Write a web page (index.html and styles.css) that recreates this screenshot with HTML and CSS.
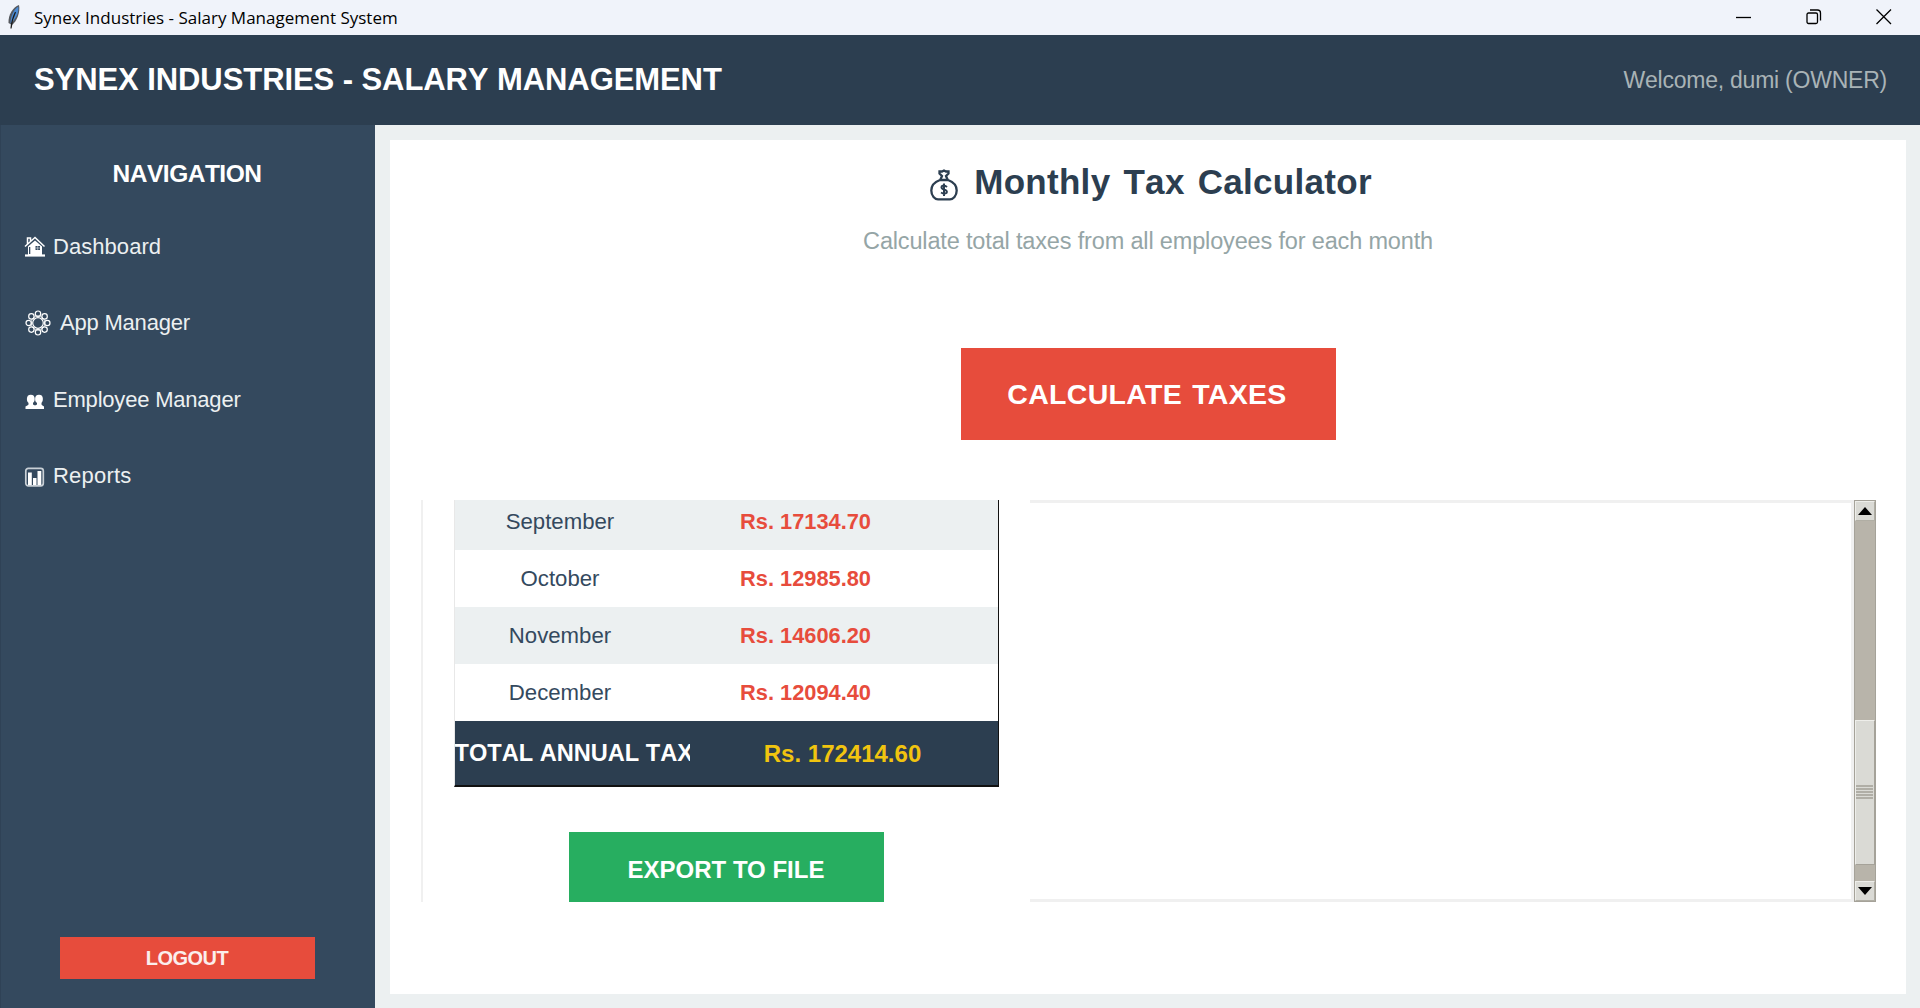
FILE: index.html
```html
<!DOCTYPE html>
<html lang="en">
<head>
<meta charset="utf-8">
<title>Synex Industries - Salary Management System</title>
<link rel="stylesheet" href="styles.css">
</head>
<body>
<div class="window">
  <div class="titlebar">
    <svg class="feather" width="16" height="26" viewBox="0 0 16 26">
      <path d="M13 1C7 3 2 11 2.500 19L6 21C11 17 14.500 8 13 1Z" fill="#55585e"/>
      <path d="M12.300 2.500C7 6 4.500 13 4.500 19.500C10 15 13 9 12.300 2.500Z" fill="#4a8ad4"/>
      <path d="M9.500 8C7 13 5.500 18 5 24.500" fill="none" stroke="#1c1c1c" stroke-width="1.200"/>
    </svg>
    <span class="window-title">Synex Industries - Salary Management System</span>
    <div class="window-controls">
      <svg width="16" height="16" viewBox="0 0 16 16"><path d="M0 8.500H15"/></svg>
      <svg width="16" height="16" viewBox="0 0 16 16"><rect x="1" y="4" width="10.500" height="10.500" rx="1.500"/><path d="M4 1H11.500Q14.500 1 14.500 4V11.500"/></svg>
      <svg width="16" height="16" viewBox="0 0 16 16"><path d="M.5 .5L15 15M15 .5L.5 15"/></svg>
    </div>
  </div>
  <header class="header">
    <h1 class="brand">SYNEX INDUSTRIES - SALARY MANAGEMENT</h1>
    <span class="welcome">Welcome, dumi (OWNER)</span>
  </header>
  <div class="body">
    <nav class="sidebar">
      <h2 class="nav-heading">NAVIGATION</h2>
      <a class="nav-item nav-item-home">
        <svg width="29" height="26" viewBox="0 0 29 26"><path d="M1 21.500H21" fill="none" stroke="#fff" stroke-width="2.200"/><path d="M1 12.500L11 3.500L20.500 12.500M3.500 10V4H6.500V7" fill="none" stroke="#fff" stroke-width="1.500"/><path d="M4 12.500L11 6.500L18 12.500V21H4Z" fill="#fff"/><path d="M11.500 12H16V16H11.500ZM5 13H6.300V20H5Z" fill="#34495e"/><path d="M13.700 12V16M11.500 14H16" stroke="#c8d0d6" stroke-width=".7"/></svg>
        <span>Dashboard</span>
      </a>
      <a class="nav-item">
        <svg width="36" height="26" viewBox="0 0 36 26"><g fill="none" stroke="#fff" stroke-width="1.200"><circle cx="14" cy="13" r="5.300"/><circle cx="14" cy="13" r="7" stroke-width=".7"/><circle cx="14" cy="3.700" r="2.700"/><circle cx="20.600" cy="6.400" r="2.700"/><circle cx="23.300" cy="13" r="2.700"/><circle cx="20.600" cy="19.600" r="2.700"/><circle cx="14" cy="22.300" r="2.700"/><circle cx="7.400" cy="19.600" r="2.700"/><circle cx="4.700" cy="13" r="2.700"/><circle cx="7.400" cy="6.400" r="2.700"/></g></svg>
        <span>App Manager</span>
      </a>
      <a class="nav-item nav-item-people">
        <svg width="29" height="26" viewBox="0 0 29 26"><g fill="#fff"><ellipse cx="6.800" cy="12" rx="3.900" ry="4.300"/><ellipse cx="15" cy="12" rx="3.900" ry="4.300"/><path d="M4.500 14H9V19H4.500ZM13 14H17.500V19H13Z"/><path d="M1.500 22V19.500L5 17.500H9L11 18.500L13 17.500H17L20 19.500V22Z"/></g></svg>
        <span>Employee Manager</span>
      </a>
      <a class="nav-item nav-item-reports">
        <svg width="29" height="26" viewBox="0 0 29 26"><rect x="1.800" y="4.300" width="17.500" height="17.500" rx="2.500" fill="none" stroke="#c9d0d6" stroke-width="1.700"/><path d="M4 8.500H7.800V21H4ZM9 14H12.500V21H9ZM13.500 7H17.300V21H13.500Z" fill="#fff"/></svg>
        <span>Reports</span>
      </a>
      <button class="logout">LOGOUT</button>
    </nav>
    <main class="main">
      <section class="card">
        <h2 class="page-title">
          <svg width="30" height="34" viewBox="0 0 30 34"><g fill="none" stroke="#2c3e50" stroke-width="2.300"><path d="M11 12C5.500 14 2.300 18 2.300 22.500C2.300 28 6 31.300 9 31.300H21C24 31.300 27.700 28 27.700 22.500C27.700 18 24.500 14 19 12Z"/><path d="M11.500 11.500L13 8L10.500 5.500V3.500H13L15 2.500L17 3.500H19.500V5.500L17 8L18.500 11.500"/></g><path d="M18 19Q15 16.500 12.700 18.300Q11.700 20.500 15 21.500Q18.700 22.500 17.700 24.700Q15.500 26.500 12 24.500M15 15.500V28" fill="none" stroke="#2c3e50" stroke-width="2"/></svg>
          <span>Monthly Tax Calculator</span>
        </h2>
        <p class="subtitle">Calculate total taxes from all employees for each month</p>
        <button class="calculate">CALCULATE TAXES</button>
        <div class="results">
          <div class="results-left">
            <div class="table">
              <div class="row shaded first"><span class="month">September</span><span class="amount">Rs. 17134.70</span></div>
              <div class="row"><span class="month">October</span><span class="amount">Rs. 12985.80</span></div>
              <div class="row shaded"><span class="month">November</span><span class="amount">Rs. 14606.20</span></div>
              <div class="row"><span class="month">December</span><span class="amount">Rs. 12094.40</span></div>
              <div class="row total"><span class="total-label">TOTAL ANNUAL TAX</span><span class="total-amount">Rs. 172414.60</span></div>
            </div>
            <button class="export">EXPORT TO FILE</button>
          </div>
          <div class="results-right"></div>
          <div class="scrollbar">
            <div class="arrow"><svg width="14" height="8" viewBox="0 0 14 8"><path d="M7 0L14 8H0Z"/></svg></div>
            <div class="trough"></div>
            <div class="thumb"><i></i><i></i><i></i><i></i><i></i></div>
            <div class="trough-end"></div>
            <div class="arrow"><svg width="14" height="8" viewBox="0 0 14 8"><path d="M0 0H14L7 8Z"/></svg></div>
          </div>
        </div>
      </section>
    </main>
  </div>
</div>
</body>
</html>
```
FILE: styles.css
```css
* { box-sizing: border-box; margin: 0; padding: 0; }
body {
  width: 1920px; height: 1008px; overflow: hidden;
  font-family: "Liberation Sans", Arial, sans-serif;
  font-kerning: none;
}
button { border: 0; font-family: inherit; font-weight: bold; color: #fff; }
svg { display: block; flex: none; }
.window { display: flex; flex-direction: column; height: 1008px; }

.titlebar { display: flex; align-items: center; height: 35px; background: #f0f3fa; padding: 0 28px 0 6px; }
.feather { margin-top: -2px; }
.window-title { margin-left: 12px; font: 17px/24px "Open Sans", "Noto Sans", sans-serif; color: #000; white-space: nowrap; }
.window-controls { display: flex; gap: 54px; margin-left: auto; margin-top: -2px; fill: none; stroke: #000; stroke-width: 1.3; }

.header { display: flex; justify-content: space-between; align-items: center; height: 90px; padding: 0 33px 0 34px; background: #2c3e50; }
.brand { font-size: 31px; line-height: 34px; letter-spacing: -.08px; color: #fff; }
.welcome { font-size: 23px; line-height: 26px; letter-spacing: -.23px; color: #a9b3b6; }

.body { display: flex; flex: 1; min-height: 0; }
.sidebar { display: flex; flex-direction: column; width: 375px; background: #34495e; border-left: 1px solid #2f4256; padding: 35px 0 29px 23px; }
.nav-heading { align-self: center; margin-right: 25px; font-size: 24.5px; line-height: 27px; letter-spacing: -.5px; color: #fff; margin-bottom: 46px; }
.nav-item { display: flex; align-items: center; height: 26px; margin-bottom: 50.6px; font-size: 22px; line-height: 26px; letter-spacing: -.2px; color: #ecf0f1; white-space: nowrap; }
.nav-item span { padding-top: 1px; }
.nav-item-home { letter-spacing: .05px; }
.nav-item-home svg, .nav-item-people svg, .nav-item-reports svg { margin-top: 2px; }
.nav-item-reports { letter-spacing: .2px; }
.logout { width: 255px; height: 42px; margin: auto 0 0 36px; padding-right: 1px; background: #e74c3c; font-size: 20px; letter-spacing: -.5px; color: #fbeeec; }

.main { flex: 1; background: #ecf0f1; padding: 15px 14px 14px 15px; }
.card { display: flex; flex-direction: column; align-items: center; height: 854px; background: #fff; padding-top: 22px; }
.page-title { display: flex; align-items: center; gap: 15px; height: 40px; margin-left: 5px; font-size: 35px; letter-spacing: .3px; word-spacing: 3px; color: #2c3e50; }
.page-title svg { margin-top: 6px; }
.subtitle { margin-top: 26px; font-size: 23.5px; line-height: 27px; letter-spacing: -.16px; color: #95a5a6; }
.calculate { width: 375px; height: 92px; margin-top: 93px; padding-right: 2px; background: #e74c3c; font-size: 28.5px; letter-spacing: .3px; word-spacing: 2px; }

.results { display: flex; width: 1455px; height: 402px; margin-top: 60px; }
.results-left { display: flex; flex-direction: column; width: 609px; border-left: 2px solid #f0f0f0; padding-left: 31px; }
.table { width: 545px; border: solid #000; border-color: #000 #111 #111 #e8e8e8; border-width: 0 1px 2px 1px; }
.row { display: flex; align-items: center; height: 57px; padding-top: 1px; font-size: 22.2px; color: #34495e; }
.row.first { height: 50px; padding: 0 0 7px; }
.shaded { background: #ecf0f1; }
.month { width: 211px; text-align: center; }
.amount { width: 280px; text-align: center; font-size: 21.8px; font-weight: bold; color: #e74c3c; }
.row.total { height: 64px; background: #2c3e50; font-size: 23.6px; font-weight: bold; color: #fff; }
.total-label { width: 235px; overflow: hidden; white-space: nowrap; }
.total-amount { width: 306px; text-align: center; font-size: 24px; color: #f1c40f; }
.export { width: 315px; height: 70px; margin: 45px 0 0 115px; padding-top: 5px; background: #27ae60; font-size: 24px; letter-spacing: 0; }
.results-right { flex: 1; border: solid #f0f0f0; border-width: 3px 3px 3px 0; }

.scrollbar { display: flex; flex-direction: column; width: 22px; background: #b8b4aa; border: 1px solid #a5a299; }
.arrow { display: flex; align-items: center; justify-content: center; height: 20px; background: #dadad5; border: 1px solid; border-color: #eeeeea #b0aea4 #b0aea4 #eeeeea; }
.trough { height: 199px; }
.thumb { display: flex; flex-direction: column; align-items: center; justify-content: center; gap: 1px; height: 145px; background: #dadad5; border: 1px solid; border-color: #eeeeea #a5a299 #a5a299 #eeeeea; padding-bottom: 1px; }
.thumb i { width: 17px; height: 2px; background: #b0aea6; }
.trough-end { flex: 1; }
```
